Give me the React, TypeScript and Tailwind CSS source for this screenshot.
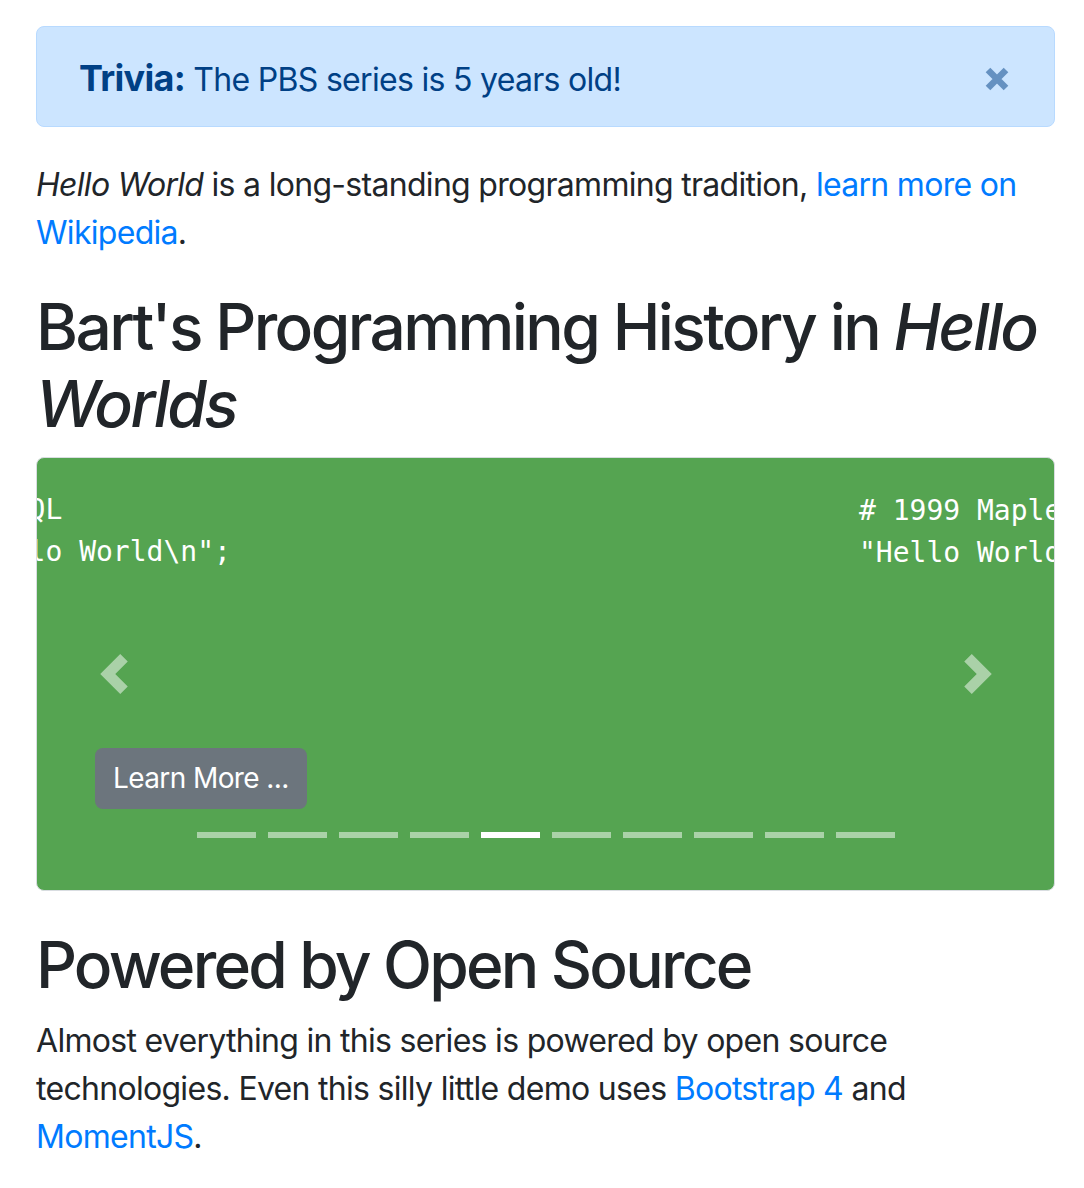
const FONT = "font-['Inter','Noto_Sans',sans-serif]";

const INDICATORS = Array.from({ length: 10 }, (_, i) => i);
const ACTIVE = 4;

function ChevronLeft() {
  return (
    <svg viewBox="0 0 8 8" className="h-10 w-10" fill="#fff">
      <path d="M5.25 0l-4 4 4 4 1.5-1.5-2.5-2.5 2.5-2.5-1.5-1.5z" />
    </svg>
  );
}

function ChevronRight() {
  return (
    <svg viewBox="0 0 8 8" className="h-10 w-10" fill="#fff">
      <path d="M2.75 0l-1.5 1.5 2.5 2.5-2.5 2.5 1.5 1.5 4-4-4-4z" />
    </svg>
  );
}

function TriviaAlert() {
  return (
    <div className="flex h-[101px] items-center justify-between rounded-[8px] border border-[#b8daff] bg-[#cce5ff] pl-[42px] pr-[44px] pt-[4px] text-[#004085]">
      <p className="text-[32px] leading-[48px] tracking-[-0.7px]">
        <strong className="text-[36px] font-bold">Trivia:</strong> The PBS series is 5 years old!
      </p>
      <button type="button" className="mt-[1px] opacity-50" aria-label="Close">
        <svg viewBox="0 0 26 26" className="h-[26px] w-[26px]">
          <path d="M4 4L22 22M22 4L4 22" stroke="#004085" strokeWidth="6.5" />
        </svg>
      </button>
    </div>
  );
}

function HelloCarousel() {
  return (
    <div className="relative h-[434px] overflow-hidden rounded-[8px] border border-[#d9dde1] bg-[#55a451]">
      <pre className="absolute left-[-177px] top-[31px] font-['DejaVu_Sans_Mono',monospace] text-[28px] leading-[42px] text-white">
        {"# 1998 MySQL\nprint \"Hello World\\n\";"}
      </pre>
      <pre className="absolute left-[822px] top-[32px] font-['DejaVu_Sans_Mono',monospace] text-[28px] leading-[42px] text-white">
        {"# 1999 Maple\n\"Hello World\";"}
      </pre>

      <div className="absolute inset-y-0 left-0 flex w-[154px] items-center justify-center opacity-50">
        <ChevronLeft />
      </div>
      <div className="absolute inset-y-0 right-0 flex w-[152px] items-center justify-center opacity-50">
        <ChevronRight />
      </div>

      <button
        type="button"
        className="absolute left-[58px] top-[290px] flex h-[61px] items-center rounded-[8px] bg-[#6c757d] px-[18px] text-[28px] tracking-[-0.6px] text-white"
      >
        Learn More ...
      </button>

      <div className="absolute bottom-[52px] left-0 right-0 flex justify-center gap-[12px]">
        {INDICATORS.map((i) => (
          <span
            key={i}
            className={`h-[6px] w-[59px] bg-white ${i === ACTIVE ? "opacity-100" : "opacity-50"}`}
          />
        ))}
      </div>
    </div>
  );
}

export default function App() {
  return (
    <div className={`${FONT} min-h-[1188px] bg-white pt-[26px] text-[#212529]`}>
      <div className="ml-[36px] w-[1019px]">
        <TriviaAlert />

        <p className="mt-[34px] text-[32px] leading-[48px] tracking-[-0.7px]">
          <em>Hello World</em> is a long-standing programming tradition,{" "}
          <a href="#" className="text-[#007bff]">
            learn more on Wikipedia
          </a>
          .
        </p>

        <h2 className="mt-[32px] text-[64px] font-medium leading-[76.8px] tracking-[-2.6px]">
          Bart's Programming History in <em>Hello Worlds</em>
        </h2>

        <div className="mt-[14px]">
          <HelloCarousel />
        </div>

        <h2 className="mt-[36px] text-[64px] font-medium leading-[76.8px] tracking-[-2.8px]">
          Powered by Open Source
        </h2>

        <p className="mt-[14px] text-[32px] leading-[48px] tracking-[-0.7px]">
          Almost everything in this series is powered by open source technologies. Even this silly little demo
          uses{" "}
          <a href="#" className="text-[#007bff]">
            Bootstrap 4
          </a>{" "}
          and{" "}
          <a href="#" className="text-[#007bff]">
            MomentJS
          </a>
          .
        </p>
      </div>
    </div>
  );
}
